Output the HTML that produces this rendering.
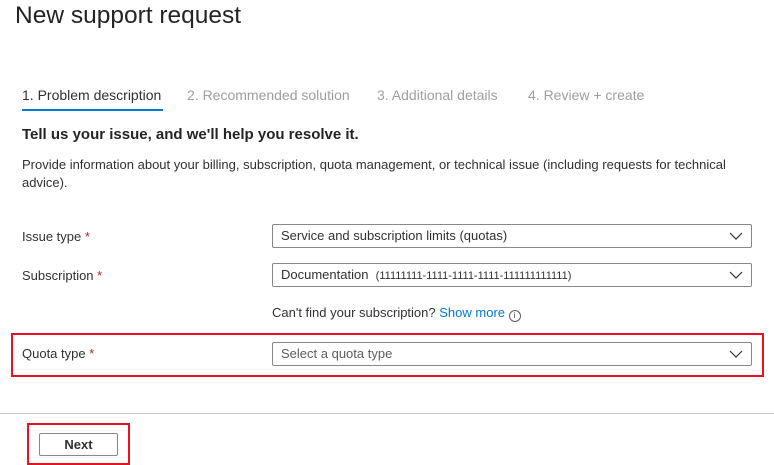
<!DOCTYPE html>
<html><head><style>
body{margin:0;width:774px;height:465px;background:#fff;font-family:"Liberation Sans",sans-serif;color:#323130;position:relative;overflow:hidden}
.a{position:absolute;white-space:nowrap}
.dd{position:absolute;left:272px;width:480px;height:24px;border:1px solid #8a8886;border-radius:2px;font-size:13px;line-height:22px;padding-left:8px;box-sizing:border-box}
.dd svg{position:absolute;right:8px;top:7px}
.req{color:#a4262c}
.lbl{font-size:13px;left:22px}
</style></head><body>
<div class="a" style="left:15px;top:2px;font-size:24.5px;color:#252423">New support request</div>
<div class="a" style="left:22px;top:87px;font-size:14px;color:#323130">1. Problem description</div>
<div style="position:absolute;left:22px;top:109px;width:141px;height:2px;background:#0078d4"></div>
<div class="a" style="left:187px;top:87px;font-size:14px;color:#a19f9d">2. Recommended solution</div>
<div class="a" style="left:377px;top:87px;font-size:14px;color:#a19f9d">3. Additional details</div>
<div class="a" style="left:528px;top:87px;font-size:14px;color:#a19f9d">4. Review + create</div>
<div class="a" style="left:22px;top:126px;font-size:15px;font-weight:bold;color:#252423">Tell us your issue, and we'll help you resolve it.</div>
<div class="a" style="left:22px;top:156px;font-size:13px;line-height:18px;white-space:normal;width:720px">Provide information about your billing, subscription, quota management, or technical issue (including requests for technical advice).</div>
<div class="a lbl" style="top:229px">Issue type <span class="req">*</span></div>
<div class="dd" style="top:224px">Service and subscription limits (quotas)<svg width="14" height="8"><path d="M1 1l6 6 6-6" stroke="#323130" fill="none" stroke-width="1.2"/></svg></div>
<div class="a lbl" style="top:268px">Subscription <span class="req">*</span></div>
<div class="dd" style="top:263px">Documentation &nbsp;<span style="font-size:11px">(11111111-1111-1111-1111-111111111111)</span><svg width="14" height="8"><path d="M1 1l6 6 6-6" stroke="#323130" fill="none" stroke-width="1.2"/></svg></div>
<div class="a" style="left:272px;top:305px;font-size:13px">Can't find your subscription? <span style="color:#0078d4">Show more</span> <span style="display:inline-block;width:10px;height:10px;border:1px solid #605e5c;border-radius:50%;font-size:8px;line-height:10px;text-align:center;vertical-align:-1px">i</span></div>
<div style="position:absolute;left:11px;top:333px;width:753px;height:44px;border:2px solid #e81123;box-sizing:border-box"></div>
<div class="a lbl" style="top:346px">Quota type <span class="req">*</span></div>
<div class="dd" style="top:342px;color:#605e5c">Select a quota type<svg width="14" height="8"><path d="M1 1l6 6 6-6" stroke="#323130" fill="none" stroke-width="1.2"/></svg></div>
<div style="position:absolute;left:0;top:413px;width:774px;height:1px;background:#c8c6c4"></div>
<div style="position:absolute;left:27px;top:423px;width:103px;height:42px;border:2px solid #e81123;box-sizing:border-box"></div>
<div style="position:absolute;left:39px;top:433px;width:79px;height:23px;border:1px solid #8a8886;border-radius:2px;box-sizing:border-box;text-align:center;font-size:13px;font-weight:bold;line-height:21px">Next</div>
</body></html>
